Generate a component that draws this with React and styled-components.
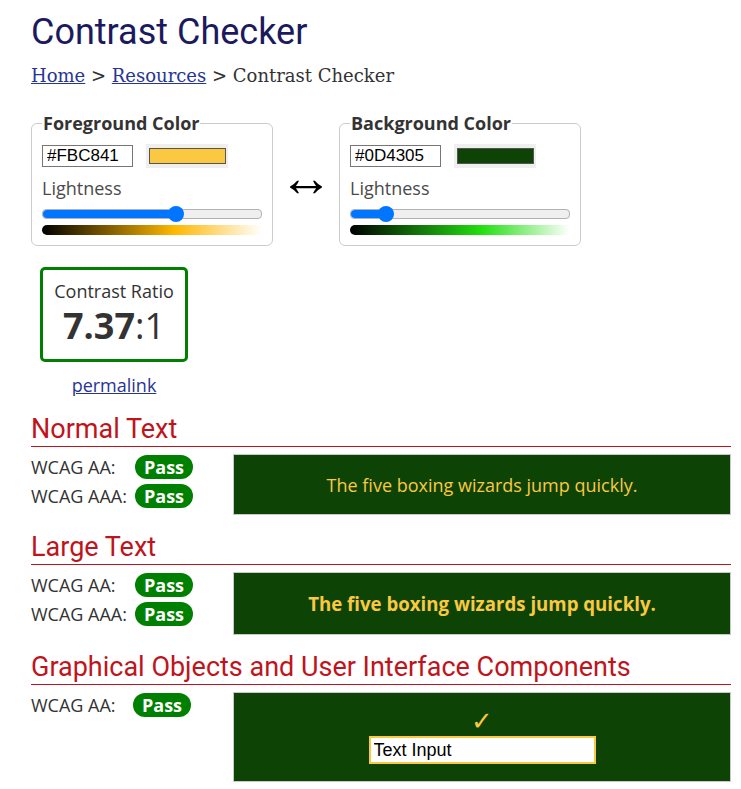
import React from "react";
import styled, { createGlobalStyle } from "styled-components";

const GlobalStyle = createGlobalStyle`
  body {
    margin: 0;
    background: #fff;
    font-family: "Open Sans", "Noto Sans", sans-serif;
    color: #333;
  }
`;

const FG = "#FBC841";
const BG = "#0D4305";

const colors = [
  {
    id: "fg",
    title: "Foreground Color",
    hex: "#FBC841",
    swatch: FG,
    lightness: 61,
    gradient: "linear-gradient(to right, #000 0%, #ffb700 60%, #fff 100%)",
  },
  {
    id: "bg",
    title: "Background Color",
    hex: "#0D4305",
    swatch: BG,
    lightness: 16,
    gradient: "linear-gradient(to right, #000 0%, #22e010 60%, #fff 100%)",
  },
];

function App() {
  return (
    <Page>
      <GlobalStyle />
      <Title>Contrast Checker</Title>
      <Breadcrumb>
        <a href="#home">Home</a> &gt; <a href="#resources">Resources</a> &gt;
        Contrast Checker
      </Breadcrumb>

      {/* color pickers */}
      <Pickers>
        <ColorBox color={colors[0]} />
        <Swap>&#8596;</Swap>
        <ColorBox color={colors[1]} />
      </Pickers>

      {/* result */}
      <RatioWrap>
        <RatioBox>
          <RatioLabel>Contrast Ratio</RatioLabel>
          <RatioValue>
            <strong>7.37</strong>:1
          </RatioValue>
        </RatioBox>
        <Permalink href="#permalink">permalink</Permalink>
      </RatioWrap>

      {/* normal text */}
      <SectionTitle>Normal Text</SectionTitle>
      <Result>
        <Checks>
          <Check>
            <span>WCAG AA:</span>
            <Badge>Pass</Badge>
          </Check>
          <Check>
            <span>WCAG AAA:</span>
            <Badge>Pass</Badge>
          </Check>
        </Checks>
        <Sample>The five boxing wizards jump quickly.</Sample>
      </Result>

      {/* large text */}
      <SectionTitle>Large Text</SectionTitle>
      <Result>
        <Checks>
          <Check>
            <span>WCAG AA:</span>
            <Badge>Pass</Badge>
          </Check>
          <Check>
            <span>WCAG AAA:</span>
            <Badge>Pass</Badge>
          </Check>
        </Checks>
        <Sample $large>The five boxing wizards jump quickly.</Sample>
      </Result>

      {/* ui components */}
      <SectionTitle>Graphical Objects and User Interface Components</SectionTitle>
      <Result>
        <Checks>
          <Check $narrow>
            <span>WCAG AA:</span>
            <Badge>Pass</Badge>
          </Check>
        </Checks>
        <UiSample>
          <Tick>&#10003;</Tick>
          <DemoInput type="text" defaultValue="Text Input" />
        </UiSample>
      </Result>
    </Page>
  );
}

function ColorBox({ color }) {
  return (
    <Fieldset>
      <Legend>{color.title}</Legend>
      <HexRow>
        <HexInput type="text" defaultValue={color.hex} />
        <Swatch>
          <span style={{ background: color.swatch }} />
        </Swatch>
      </HexRow>
      <Label>Lightness</Label>
      <Slider>
        <Fill style={{ width: `${color.lightness}%` }} />
        <Thumb style={{ left: `${color.lightness}%` }} />
      </Slider>
      <Gradient style={{ background: color.gradient }} />
    </Fieldset>
  );
}

export default App;

const Page = styled.div`
  padding: 8px 10px 10px 31px;
`;

const Title = styled.h1`
  margin: 0;
  font-family: Roboto, sans-serif;
  font-weight: 400;
  font-size: 36px;
  line-height: 48px;
  color: #1c1a5e;
`;

const Breadcrumb = styled.div`
  margin-top: 8px;
  font-family: "DejaVu Serif", serif;
  font-size: 18px;
  line-height: 24px;
  color: #333;
  a {
    color: #283593;
    text-decoration: underline;
  }
`;

const Pickers = styled.div`
  display: flex;
  align-items: flex-start;
  margin-top: 23px;
`;

const Fieldset = styled.fieldset`
  margin: 0;
  width: 242px;
  box-sizing: border-box;
  border: 1px solid #ccc;
  border-radius: 6px;
  padding: 0 10px 10px 10px;
`;

const Legend = styled.legend`
  padding: 0 1px;
  font-weight: 700;
  font-size: 18px;
  line-height: 24px;
  color: #333;
`;

const HexRow = styled.div`
  display: flex;
  align-items: center;
  gap: 13px;
  margin-top: 9px;
`;

const HexInput = styled.input`
  width: 91px;
  height: 22px;
  box-sizing: border-box;
  border: 1px solid #767676;
  padding: 0 4px;
  font-family: "Liberation Sans", Arial, sans-serif;
  font-size: 17px;
  color: #000;
`;

const Swatch = styled.div`
  width: 82px;
  height: 24px;
  background: #efefef;
  display: flex;
  align-items: center;
  justify-content: center;
  span {
    width: 77px;
    height: 16px;
    border: 1px solid #555;
    box-sizing: border-box;
  }
`;

const Label = styled.div`
  margin-top: 7px;
  font-size: 18px;
  line-height: 26px;
  color: #4a4a4a;
`;

const Slider = styled.div`
  position: relative;
  margin: 8px 0 0;
  height: 8px;
  border-radius: 4px;
  background: #efefef;
  border: 1px solid #b2b2b2;
`;

const Fill = styled.div`
  height: 100%;
  background: #0075ff;
  border-radius: 4px 0 0 4px;
`;

const Thumb = styled.div`
  position: absolute;
  top: 50%;
  width: 16px;
  height: 16px;
  margin: -8px 0 0 -8px;
  border-radius: 50%;
  background: #0075ff;
`;

const Gradient = styled.div`
  margin-top: 6px;
  height: 10px;
  border-radius: 5px 0 0 5px;
`;

const Swap = styled.div`
  width: 66px;
  padding-top: 42px;
  text-align: center;
  font-family: "Liberation Serif", serif;
  font-size: 54px;
  line-height: 50px;
  color: #000;
`;

const RatioWrap = styled.div`
  width: 148px;
  margin: 21px 0 0 9px;
  padding-bottom: 1px;
  display: flex;
  flex-direction: column;
  align-items: center;
`;

const RatioBox = styled.div`
  width: 148px;
  height: 95px;
  box-sizing: border-box;
  border: 3px solid #008000;
  border-radius: 5px;
  text-align: center;
  padding-top: 9px;
`;

const RatioLabel = styled.div`
  font-size: 18px;
  line-height: 24px;
  color: #333;
`;

const RatioValue = styled.div`
  font-size: 36px;
  line-height: 46px;
  color: #333;
  strong {
    font-weight: 700;
  }
`;

const Permalink = styled.a`
  margin-top: 12px;
  font-size: 18px;
  line-height: 22px;
  color: #283593;
`;

const SectionTitle = styled.h2`
  margin: 15px 0 0;
  font-family: Roboto, sans-serif;
  font-weight: 400;
  font-size: 27px;
  line-height: 34px;
  color: #c0141c;
  border-bottom: 1px solid #c0141c;
`;

const Result = styled.div`
  display: flex;
  align-items: flex-start;
  margin-top: 7px;
`;

const Checks = styled.div`
  width: 202px;
  flex-shrink: 0;
  margin-top: 1px;
  display: flex;
  flex-direction: column;
  gap: 5px;
`;

const Check = styled.div`
  display: flex;
  align-items: center;
  font-size: 18px;
  color: #333;
  span {
    width: ${(p) => (p.$narrow ? "102px" : "104px")};
  }
`;

const Badge = styled.div`
  background: #008000;
  color: #fff;
  font-weight: 700;
  font-size: 18px;
  line-height: 24px;
  padding: 0 9px;
  border-radius: 12px;
`;

const Sample = styled.div`
  flex: 1;
  height: ${(p) => (p.$large ? "63px" : "61px")};
  box-sizing: border-box;
  background: ${BG};
  border: 1px solid #c8c8c8;
  color: ${FG};
  display: flex;
  align-items: center;
  justify-content: center;
  font-size: ${(p) => (p.$large ? "18.66px" : "18px")};
  font-weight: ${(p) => (p.$large ? 700 : 400)};
`;

const UiSample = styled.div`
  flex: 1;
  height: 90px;
  box-sizing: border-box;
  background: ${BG};
  border: 1px solid #c8c8c8;
  display: flex;
  flex-direction: column;
  align-items: center;
  padding-top: 15px;
`;

const Tick = styled.div`
  font-family: "DejaVu Sans", sans-serif;
  font-size: 26px;
  line-height: 26px;
  color: ${FG};
`;

const DemoInput = styled.input`
  margin-top: 2px;
  width: 227px;
  height: 28px;
  box-sizing: border-box;
  border: 2px solid ${FG};
  padding: 0 3px;
  background: #fff;
  font-family: "Liberation Sans", Arial, sans-serif;
  font-size: 18px;
  color: #000;
`;
